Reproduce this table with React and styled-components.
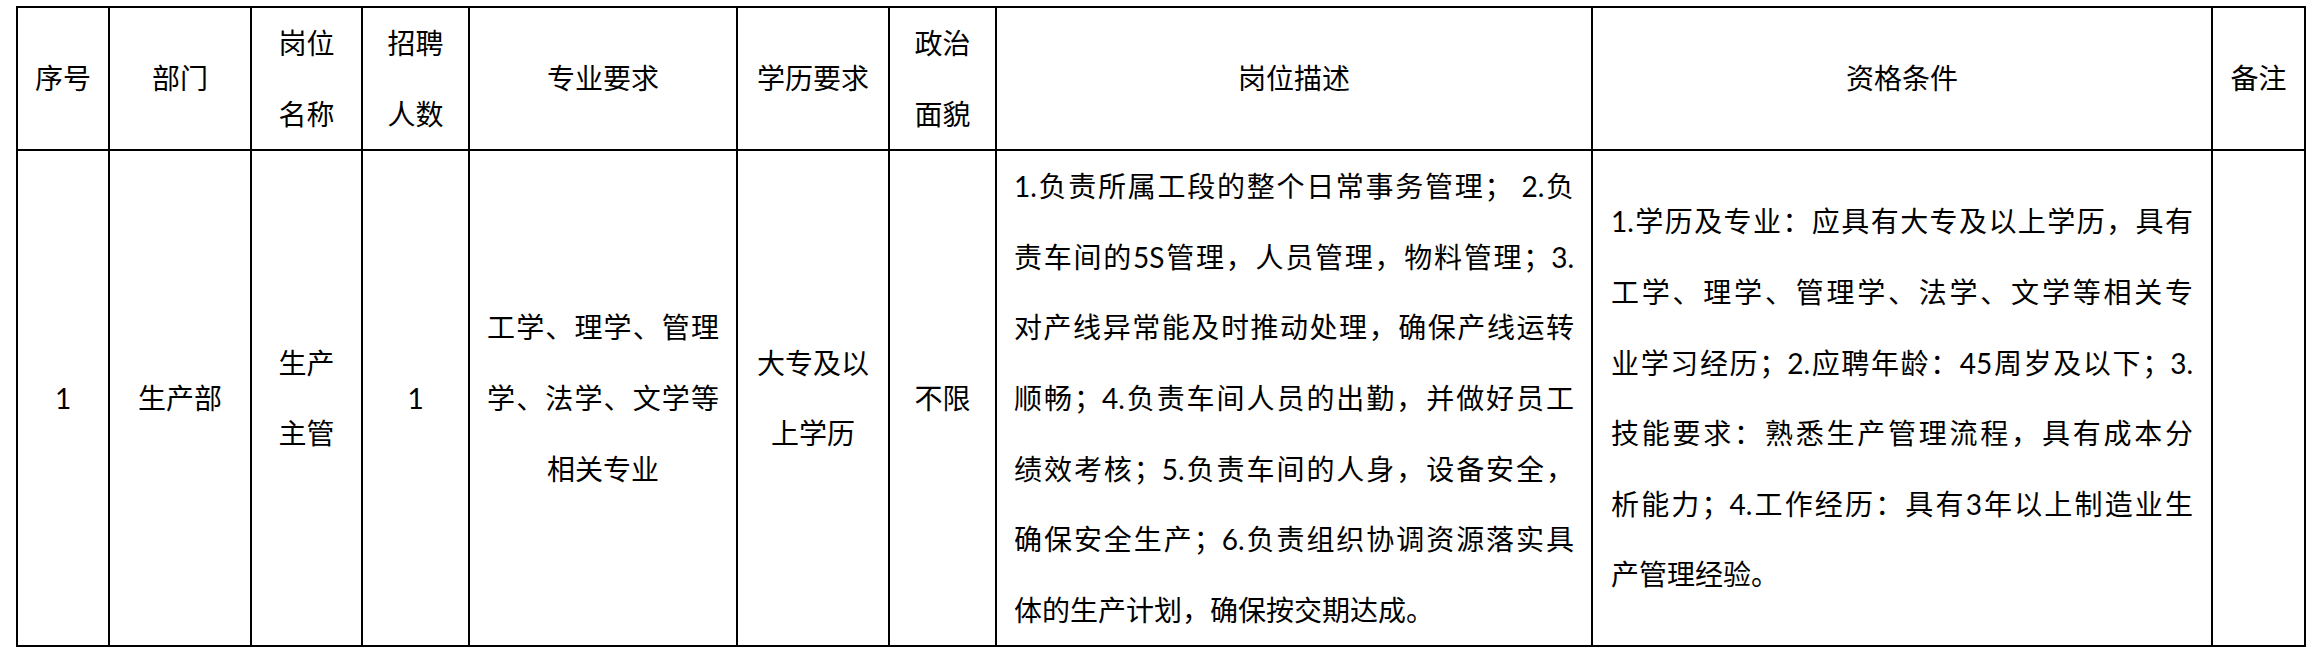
import React from "react";
import styled, { createGlobalStyle } from "styled-components";

const GlobalStyle = createGlobalStyle`
  html, body { margin: 0; padding: 0; background: #fff; }
  body { font-family: "Lato", "Noto Sans CJK SC", sans-serif; color: #000; }
`;

const Page = styled.div`
  box-sizing: border-box;
  width: 2313px;
  height: 654px;
  padding: 6px 0 0 16px;
  background: #fff;
`;

const Table = styled.table`
  border-collapse: collapse;
  table-layout: fixed;
  width: 2290px;
  font-family: "Lato", "Noto Sans CJK SC", sans-serif;
  font-size: 28px;
  line-height: 70.6px;
  color: #000;
`;

const Row = styled.tr`
  height: ${(p) => p.$h}px;
`;

const HeadCell = styled.th`
  border: 2px solid #000;
  padding: 0;
  text-align: center;
  vertical-align: middle;
  font-weight: 400;
`;

const Cell = styled.td`
  border: 2px solid #000;
  padding: 0 ${(p) => p.$pad || 0}px;
  text-align: center;
  vertical-align: middle;
`;

const Line = styled.div`
  text-align: ${(p) => p.$align};
  text-align-last: ${(p) => p.$align};
  white-space: pre-wrap;
`;

const columns = [92, 142, 111, 107, 268, 152, 107, 596, 620, 93];

const headers = [
  ["序号"],
  ["部门"],
  ["岗位", "名称"],
  ["招聘", "人数"],
  ["专业要求"],
  ["学历要求"],
  ["政治", "面貌"],
  ["岗位描述"],
  ["资格条件"],
  ["备注"],
];

const description = [
  "1.负责所属工段的整个日常事务管理； 2.负",
  "责车间的5S管理，人员管理，物料管理；3.",
  "对产线异常能及时推动处理，确保产线运转",
  "顺畅；4.负责车间人员的出勤，并做好员工",
  "绩效考核；5.负责车间的人身，设备安全，",
  "确保安全生产；6.负责组织协调资源落实具",
  "体的生产计划，确保按交期达成。",
];

const qualification = [
  "1.学历及专业：应具有大专及以上学历，具有",
  "工学、理学、管理学、法学、文学等相关专",
  "业学习经历；2.应聘年龄：45周岁及以下；3.",
  "技能要求：熟悉生产管理流程，具有成本分",
  "析能力；4.工作经历：具有3年以上制造业生",
  "产管理经验。",
];

function Lines({ lines, lastAlign = "left", align = "justify" }) {
  return lines.map((t, i) => (
    <Line key={i} $align={i === lines.length - 1 ? lastAlign : align}>
      {t}
    </Line>
  ));
}

export default function App() {
  return (
    <>
      <GlobalStyle />
      <Page>
        <Table>
          <colgroup>
            {columns.map((w, i) => (
              <col key={i} style={{ width: w }} />
            ))}
          </colgroup>
          <thead>
            <Row $h={143}>
              {headers.map((h, i) => (
                <HeadCell key={i}>
                  <Lines lines={h} align="center" lastAlign="center" />
                </HeadCell>
              ))}
            </Row>
          </thead>
          <tbody>
            <Row $h={496}>
              <Cell>1</Cell>
              <Cell>生产部</Cell>
              <Cell>
                <Lines lines={["生产", "主管"]} align="center" lastAlign="center" />
              </Cell>
              <Cell>1</Cell>
              <Cell $pad={17}>
                <Lines
                  lines={["工学、理学、管理", "学、法学、文学等", "相关专业"]}
                  lastAlign="center"
                />
              </Cell>
              <Cell>
                <Lines lines={["大专及以", "上学历"]} align="center" lastAlign="center" />
              </Cell>
              <Cell>不限</Cell>
              <Cell $pad={17}>
                <Lines lines={description} />
              </Cell>
              <Cell $pad={18}>
                <Lines lines={qualification} />
              </Cell>
              <Cell />
            </Row>
          </tbody>
        </Table>
      </Page>
    </>
  );
}
